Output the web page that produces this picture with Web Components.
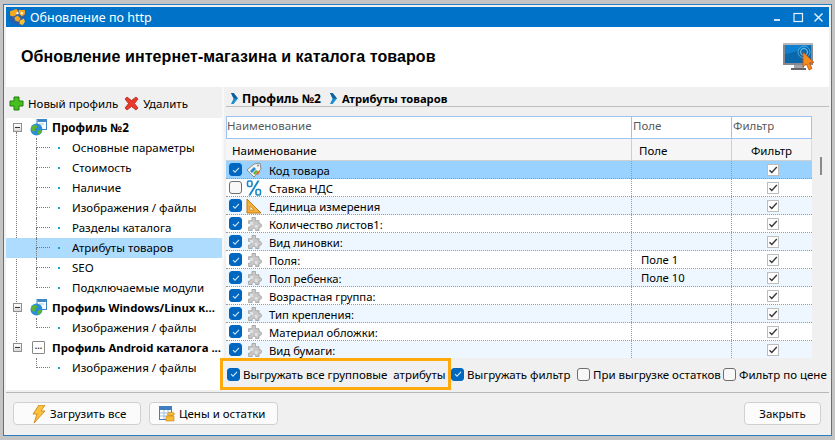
<!DOCTYPE html>
<html>
<head>
<meta charset="utf-8">
<title>Обновление по http</title>
<style>
  html, body { margin: 0; height: 100%; background: #c4c4c4; overflow: hidden; }
  body { padding: 4px 3px 4px 3px; box-sizing: border-box; font: 11.5px "Noto Sans", "Open Sans", sans-serif; color: #000; }
</style>
</head>
<body>

<template id="t-check">
  <style>
    :host { display: inline-flex; flex: none; width: 13px; height: 13px; box-sizing: border-box; border-radius: 3px; border: 1px solid #6e6e6e; background: #f8f8f8; align-items: center; justify-content: center; }
    :host([checked]) { background: #0067c0; border-color: #0067c0; }
    svg { display: none; width: 10px; height: 10px; }
    :host([checked]) svg { display: block; }
  </style>
  <svg viewBox="0 0 10 10"><path d="M2 5.200l2 2 4-4.400" fill="none" stroke="#cfe4f7" stroke-width="1.100"/></svg>
</template>

<app-window>
  <title-bar slot="title">Обновление по http</title-bar>
  <page-head slot="head">Обновление интернет-магазина и каталога товаров</page-head>

  <profile-tree slot="tree">
    <tree-node root icon="globe">Профиль №2</tree-node>
    <tree-node>Основные параметры</tree-node>
    <tree-node>Стоимость</tree-node>
    <tree-node>Наличие</tree-node>
    <tree-node>Изображения / файлы</tree-node>
    <tree-node>Разделы каталога</tree-node>
    <tree-node selected>Атрибуты товаров</tree-node>
    <tree-node>SEO</tree-node>
    <tree-node last>Подключаемые модули</tree-node>
    <tree-node root icon="globe" style="font-size:11.35px">Профиль Windows/Linux к...</tree-node>
    <tree-node last>Изображения / файлы</tree-node>
    <tree-node root icon="dots" style="font-size:11.35px">Профиль Android каталога ...</tree-node>
    <tree-node last>Изображения / файлы</tree-node>
  </profile-tree>

  <attr-grid slot="grid">
    <attr-row sel on icon="tag">Код товара</attr-row>
    <attr-row icon="percent">Ставка НДС</attr-row>
    <attr-row alt on icon="ruler">Единица измерения</attr-row>
    <attr-row on>Количество листов1:</attr-row>
    <attr-row alt on>Вид линовки:</attr-row>
    <attr-row on field="Поле 1">Поля:</attr-row>
    <attr-row alt on field="Поле 10">Пол ребенка:</attr-row>
    <attr-row on>Возрастная группа:</attr-row>
    <attr-row alt on>Тип крепления:</attr-row>
    <attr-row on>Материал обложки:</attr-row>
    <attr-row alt on>Вид бумаги:</attr-row>
  </attr-grid>
  <option-bar slot="options"></option-bar>

  <push-button slot="btn" style="width:128px;padding-left:18px">
    <svg slot="icon" width="14" height="18" viewBox="0 0 14 18" style="display:block"><path d="M7 0h6L9 6h4L2 18l3-9H1z" fill="#f8c23c" stroke="#d2841a" stroke-width=".9"/></svg>
    Загрузить все
  </push-button>
  <push-button slot="btn" style="width:129px;padding-left:9px">
    <svg slot="icon" width="16" height="16" viewBox="0 0 16 16" style="display:block"><rect x=".5" y=".5" width="12" height="13" fill="#fff" stroke="#3f7fbf"/><rect x="1" y="1" width="11" height="3" fill="#3f7fbf"/><path d="M1 7h11M1 10h11M5 4v9M9 4v9" stroke="#9cc0e0"/><ellipse cx="12" cy="8" rx="3.500" ry="1.800" fill="#f6b93a" stroke="#c98412" stroke-width=".6"/><path d="M7 10h8v5H7z" fill="#f6b93a" stroke="#c98412" stroke-width=".6"/></svg>
    Цены и остатки
  </push-button>
  <push-button slot="close" style="width:77px;justify-content:center">Закрыть</push-button>
</app-window>

<script>
  const tpl = id => document.getElementById(id).content.cloneNode(true);

  const GLOBE = `<svg class="ic" viewBox="0 0 17 17">
      <rect x="7" y=".5" width="9.500" height="10" fill="#fff" stroke="#3f86c4"/>
      <rect x="7.500" y="1" width="8.500" height="2" fill="#3f86c4"/>
      <rect x="9" y="4.500" width="5" height="1" fill="#9cc4e4"/>
      <circle cx="6.500" cy="10.500" r="6" fill="#2a8fd8"/>
      <path d="M2.500 7c2-1.500 3.500-1 4.500 0s-.5 2-1.500 2.500 0 2-1 3-2.500-.5-3-2.500.2-2.300 1-3zM8 12c1-1 3-1.500 4-.5-.5 2-2 4-3.500 4.300-.8-1.300-1.300-2.800-.5-3.800z" fill="#5fb52e"/>
    </svg>`;
  const CHEV = `<svg viewBox="0 0 7 11">
      <path d="M0 0h2.600L7 5.500 2.600 11H0l2.600-5.500z" fill="#1a8fd0"/>
      <path d="M0 0h2.600L7 5.500H2.600z" fill="#0f5f9e"/>
    </svg>`;
  const PUZZLE = `<svg viewBox="0 0 16 16">
      <path d="M6 1.500h3.500v2.200a1.600 1.600 0 0 0 0 1H13v3h1.300a1.900 1.900 0 0 1 0 3.600H13v3.200H9.600v-1.200a1.800 1.800 0 0 0-3.400 0v1.200H2.600v-3.400h1a1.800 1.800 0 0 0 0-3.500h-1V4.700h3.300a1.600 1.600 0 0 0 .1-1z" fill="#c9c9c9" stroke="#9a9a9a" stroke-width=".8"/>
      <path d="M4 6h3v3H4zM9 9h2.500v3H9z" fill="#e2e2e2"/>
    </svg>`;

  class ACheck extends HTMLElement {
    constructor() {
      super();
      this.attachShadow({ mode: 'open' }).appendChild(tpl('t-check'));
    }
  }
  customElements.define('a-check', ACheck);

  class TitleBar extends HTMLElement {
    constructor() {
      super();
      this.attachShadow({ mode: 'open' }).innerHTML = `
        <style>
          :host { display: flex; align-items: center; height: 20px; background: #0073c8; color: #fff; font-size: 12.5px; padding: 0 5px 0 3px; flex: none; }
          .logo { width: 17px; height: 17px; margin-right: 4px; }
          .t { flex: 1; }
          .btns { display: flex; gap: 9px; align-items: center; }
          .btns svg { display: block; width: 11px; height: 11px; }
        </style>
        <svg class="logo" viewBox="0 0 16 16">
          <path d="M0 3l8-3 7 1v6l-3 9-7-2-5-4z" fill="#2b5fa8"/>
          <path d="M1 2l6-2 2 3-3 3-2 1-3-1zM9 1l6 0 0 4-3 2-2-2zM5 8l3-2 3 3-2 3-3-1z" fill="#f5a81c"/>
          <path d="M10 11l4-2 1 3-2 3-3-1z" fill="#f9c13a"/>
          <path d="M7 3l2 0 0 2-2 0zM11 3l2 0 0 2-2 0z" fill="#fff"/>
        </svg>
        <span class="t"><slot></slot></span>
        <span class="btns">
          <svg viewBox="0 0 11 11"><rect x="1" y="7" width="6" height="2" fill="#cfe3f5"/></svg>
          <svg viewBox="0 0 11 11"><rect x="1" y="1.500" width="8.500" height="8" fill="none" stroke="#e6f0fa" stroke-width="1.200"/></svg>
          <svg viewBox="0 0 11 11"><path d="M1.500 1.500l8 8M9.500 1.500l-8 8" stroke="#e6f0fa" stroke-width="1.400"/></svg>
        </span>`;
    }
  }
  customElements.define('title-bar', TitleBar);

  class PageHead extends HTMLElement {
    constructor() {
      super();
      this.attachShadow({ mode: 'open' }).innerHTML = `
        <style>
          :host { display: flex; align-items: center; height: 60px; background: #fff; padding: 0 14px 0 15px; flex: none; }
          .t { flex: 1; font: bold 16px "Liberation Sans", Arial, sans-serif; letter-spacing: .085px; }
          svg { width: 33px; height: 31px; margin-top: 1px; }
        </style>
        <span class="t"><slot></slot></span>
        <svg viewBox="0 0 33 31">
          <rect x="1" y="1" width="30" height="22" fill="#858a8f"/>
          <rect x="1" y="1" width="30" height="2" fill="#b5b9bd"/>
          <rect x="3" y="3" width="26" height="18" fill="#0f80cf"/>
          <path d="M3 21V12c8-1 18-5 26-9v18z" fill="#0a68ab"/>
          <circle cx="22" cy="10" r="6" fill="none" stroke="#4aa8e2"/>
          <circle cx="22" cy="10" r="3.500" fill="none" stroke="#7cc8f0"/>
          <rect x="12" y="23" width="10" height="3" fill="#a0a4a8"/>
          <rect x="9" y="26" width="15" height="2" fill="#666"/>
          <path d="M21 10l0 15 3.500-3 2.500 6 3-1.500-2.500-5.500 4.500-.5z" fill="#f58a1f" stroke="#c24f06" stroke-width=".8"/>
        </svg>`;
    }
  }
  customElements.define('page-head', PageHead);

  class TreeNode extends HTMLElement {
    constructor() {
      super();
      const root = this.hasAttribute('root');
      const icon = this.getAttribute('icon');
      const last = this.hasAttribute('last');
      let pic = '';
      if (icon === 'globe') pic = GLOBE;
      if (icon === 'dots') pic = '<span class="dots">...</span>';
      this.attachShadow({ mode: 'open' }).innerHTML = `
        <style>
          :host { display: flex; align-items: center; height: 20px; position: relative; white-space: nowrap; font-size: 11.5px; }
          :host([selected]) { background: #aedcff; }
          :host([root]) { font-weight: 700; font-size: 11.7px; }
          .minus { position: absolute; left: 7px; top: 5px; width: 9px; height: 9px; box-sizing: border-box; border: 1px solid #8f8f8f; background: linear-gradient(#fff, #d8d8d8); }
          .minus::after { content: ""; position: absolute; left: 1px; right: 1px; top: 3px; height: 1px; background: #333; }
          .ic { position: absolute; left: 24px; top: 1px; width: 17px; height: 17px; }
          .dots { position: absolute; left: 26px; top: 3px; width: 11px; height: 11px; border: 1px solid #888; border-radius: 1px; font: bold 9px/9px "Liberation Sans", sans-serif; text-align: center; color: #333; background: #fff; }
          .hl { position: absolute; left: 30px; width: 14px; top: 0; height: 10px; border-left: 1px dotted #777; border-bottom: 1px dotted #777; box-sizing: border-box; }
          .vl { position: absolute; left: 30px; top: 10px; height: 10px; border-left: 1px dotted #777; }
          .dot { position: absolute; left: 52px; top: 9px; width: 2px; height: 2px; background: #10a5dc; }
          .lab { margin-left: ${root ? 46 : 66}px; padding-bottom: 2px; }
        </style>
        ${root ? `<span class="minus"></span>${pic}` : `<span class="hl"></span>${last ? '' : '<span class="vl"></span>'}<span class="dot"></span>`}
        <span class="lab"><slot></slot></span>`;
    }
  }
  customElements.define('tree-node', TreeNode);

  class ProfileTree extends HTMLElement {
    constructor() {
      super();
      this.attachShadow({ mode: 'open' }).innerHTML = `
        <style>
          :host { display: flex; flex-direction: column; width: 216px; flex: none; }
          .bar { display: flex; align-items: center; height: 31px; background: #f0f0f0; padding: 1px 0 0 3px; box-sizing: border-box; flex: none; }
          .bar svg { width: 15px; height: 15px; flex: none; }
          .a { margin: 0 6px 0 4px; }
          .list { flex: 1; background: #fff; position: relative; }
          .trunk { position: absolute; left: 10px; top: 14px; height: 212px; border-left: 1px dotted #777; }
        </style>
        <div class="bar">
          <svg viewBox="0 0 15 15"><path d="M5 1h5v4h4v5h-4v4H5v-4H1V5h4z" fill="#46c01e" stroke="#1f7d0e"/></svg>
          <span class="a">Новый профиль</span>
          <svg viewBox="0 0 15 15"><path d="M1 3l2-2 4.500 3.500L12 1l2 2-3.500 4.500L14 12l-2 2-4.500-3.500L3 14l-2-2 3.500-4.500z" fill="#e8392c" stroke="#a81c14" stroke-width=".7"/></svg>
          <span class="a">Удалить</span>
        </div>
        <div class="list"><span class="trunk"></span><slot></slot></div>`;
    }
  }
  customElements.define('profile-tree', ProfileTree);

  class ItemIcon extends HTMLElement {
    constructor() {
      super();
      const kind = this.getAttribute('kind');
      const pics = {
        tag: `<svg viewBox="0 0 16 16"><path d="M1 8l7-6 6-1 1 6-7 8z" fill="#f4f4f4" stroke="#8a8a8a"/><path d="M4 9l4-4 2 2-4 4z" fill="#2a8ad0"/><path d="M7 11l3-3 2 1-3 4z" fill="#63b33a"/><path d="M10 12l2-3 2 0-2 4z" fill="#e8662a"/><circle cx="12" cy="3.500" r="1" fill="#888"/></svg>`,
        percent: `<svg viewBox="0 0 16 16"><path d="M11.500 .5h2.200L4.500 15.500H2.300z" fill="#1588c8"/><rect x="1.500" y="1" width="4.500" height="5.500" rx="1.500" fill="none" stroke="#1588c8" stroke-width="1.600"/><rect x="10" y="9.500" width="4.500" height="5.500" rx="1.500" fill="none" stroke="#1588c8" stroke-width="1.600"/></svg>`,
        ruler: `<svg viewBox="0 0 16 16"><path d="M1 1l14 14H1z" fill="#f3b13c" stroke="#c47a10"/><path d="M4 8l4 4H4z" fill="#fff" stroke="#c47a10" stroke-width=".7"/></svg>`,
        puzzle: PUZZLE
      };
      this.attachShadow({ mode: 'open' }).innerHTML = `
        <style>
          :host { display: block; width: 16px; height: 16px; flex: none; }
          svg { display: block; width: 16px; height: 16px; }
        </style>${pics[kind] || pics.puzzle}`;
    }
  }
  customElements.define('item-icon', ItemIcon);

  class AttrRow extends HTMLElement {
    constructor() {
      super();
      const on = this.hasAttribute('on');
      this.attachShadow({ mode: 'open' }).innerHTML = `
        <style>
          :host { display: grid; grid-template-columns: 406px 100px 80px; height: 18px; box-sizing: border-box; border-bottom: 1px dotted #9a9a9a; background: #fff; font-size: 11.3px; color: #000; }
          :host([alt]) { background: #eef7ff; }
          :host([sel]) { background: #99d1ff; }
          .c { display: flex; align-items: center; box-sizing: border-box; border-right: 1px dotted #9a9a9a; white-space: nowrap; }
          .n { padding-left: 3px; }
          .n item-icon { margin-left: 4px; }
          .n span { margin-left: 7px; padding-top: 1px; }
          .f { padding-left: 9px; }
          .k { border-right: 0; justify-content: center; padding-left: 2px; }
          .tick { width: 12px; height: 12px; box-sizing: border-box; background: #fff; border: 1px solid #bdbdbd; display: block; }
        </style>
        <div class="c n"><a-check ${on ? 'checked' : ''}></a-check><item-icon kind="${this.getAttribute('icon') || 'puzzle'}"></item-icon><span><slot></slot></span></div>
        <div class="c f">${this.getAttribute('field') || ''}</div>
        <div class="c k"><svg class="tick" viewBox="0 0 10 10"><path d="M1.500 5.200l2.300 2.300 5-5.500" fill="none" stroke="#333" stroke-width="1.300"/></svg></div>`;
    }
  }
  customElements.define('attr-row', AttrRow);

  class AttrGrid extends HTMLElement {
    constructor() {
      super();
      this.attachShadow({ mode: 'open' }).innerHTML = `
        <style>
          :host { display: flex; flex-direction: column; flex: 1; min-height: 0; background: #f0f0f0; position: relative; }
          .crumbs { display: flex; align-items: center; height: 20px; margin: 0 0 0 2px; border-bottom: 1px solid #bdbdbd; font-weight: 700; font-size: 12px; padding: 3px 0 0 5px; box-sizing: border-box; flex: none; }
          .crumbs svg { width: 7px; height: 11px; margin-right: 4px; flex: none; }
          .crumbs span { margin-right: 9px; }
          .crumbs span.s { font-size: 11.2px; margin-left: 1px; }
          .body { flex: 1; min-height: 0; display: flex; flex-direction: column; padding: 9px 0 0 2px; }
          .filter, .head { display: grid; grid-template-columns: 406px 100px 80px; width: 586px; flex: none; box-sizing: border-box; }
          .filter { height: 23px; background: #fff; color: #5a5a5a; font-size: 11.5px; }
          .filter div { border: 1px solid #9cc3f2; border-left-width: 0; box-sizing: border-box; line-height: 14px; padding: 2px 0 0 1px; }
          .filter div:first-child { border-left-width: 1px; padding-left: 0; }
          .head { height: 22px; background: #f6f6f6; font-size: 11.5px; border-bottom: 1px solid #cfcfcf; }
          .head div { display: flex; align-items: center; box-sizing: border-box; border-right: 1px solid #cfcfcf; padding: 1px 0 0 6px; }
          .head div:nth-child(2) { padding-left: 7px; }
          .head div:nth-child(3) { border-right: 1px solid #dcdcdc; justify-content: center; padding-left: 0; }
          .rows { flex: 1; min-height: 0; overflow: hidden; width: 586px; }
          .thumb { position: absolute; left: 596px; top: 70px; width: 2px; height: 18px; background: #8a8a8a; }
        </style>
        <div class="crumbs">${CHEV}<span>Профиль №2</span>${CHEV}<span class="s">Атрибуты товаров</span></div>
        <div class="body">
          <div class="filter"><div>Наименование</div><div>Поле</div><div>Фильтр</div></div>
          <div class="head"><div>Наименование</div><div>Поле</div><div>Фильтр</div></div>
          <div class="rows"><slot></slot></div>
        </div>
        <span class="thumb"></span>`;
    }
  }
  customElements.define('attr-grid', AttrGrid);

  class OptionBar extends HTMLElement {
    constructor() {
      super();
      this.attachShadow({ mode: 'open' }).innerHTML = `
        <style>
          :host { display: flex; align-items: center; height: 32px; flex: none; background: #f0f0f0; white-space: nowrap; font-size: 11.5px; padding-left: 3px; position: relative; }
          label { display: inline-flex; align-items: center; gap: 3px; }
          .mark { position: absolute; left: -4px; top: 0; width: 231px; height: 32px; box-sizing: border-box; border: 3px solid #ffa90a; pointer-events: none; }
        </style>
        <label style="width:224px"><a-check checked></a-check>Выгружать все групповые&nbsp; атрибуты</label>
        <label style="width:126px"><a-check checked></a-check>Выгружать фильтр</label>
        <label style="width:146px"><a-check></a-check>При выгрузке остатков</label>
        <label><a-check></a-check>Фильтр по цене</label>
        <span class="mark"></span>`;
    }
  }
  customElements.define('option-bar', OptionBar);

  class PushButton extends HTMLElement {
    constructor() {
      super();
      this.attachShadow({ mode: 'open' }).innerHTML = `
        <style>
          :host { display: inline-flex; align-items: center; justify-content: flex-start; gap: 4px; height: 23px; box-sizing: border-box; background: #fbfbfb; border: 1px solid #d0d0d0; border-radius: 4px; font-size: 11.5px; flex: none; }
        </style>
        <slot name="icon"></slot><slot></slot>`;
    }
  }
  customElements.define('push-button', PushButton);

  class AppWindow extends HTMLElement {
    constructor() {
      super();
      this.attachShadow({ mode: 'open' }).innerHTML = `
        <style>
          :host { display: flex; flex-direction: column; height: 432px; box-sizing: border-box; border: 1px solid #2a7fc4; padding: 2px 2px 0 2px; background: #f0f0f0; }
          .split { display: flex; flex: none; height: 303px; }
          .sep { width: 2px; background: #f8f8f8; flex: none; }
          .foot { flex: 1; display: flex; align-items: flex-start; gap: 8px; border-top: 1px solid #b8b8b8; margin-top: 2px; padding: 9px 8px 0 7px; }
          .sp { flex: 1; }
          .right { flex: 1; min-width: 0; display: flex; flex-direction: column; }
        </style>
        <slot name="title"></slot>
        <slot name="head"></slot>
        <div class="split">
          <slot name="tree"></slot>
          <span class="sep"></span>
          <div class="right"><slot name="grid"></slot><slot name="options"></slot></div>
        </div>
        <div class="foot"><slot name="btn"></slot><span class="sp"></span><slot name="close"></slot></div>`;
    }
  }
  customElements.define('app-window', AppWindow);
</script>
</body>
</html>
